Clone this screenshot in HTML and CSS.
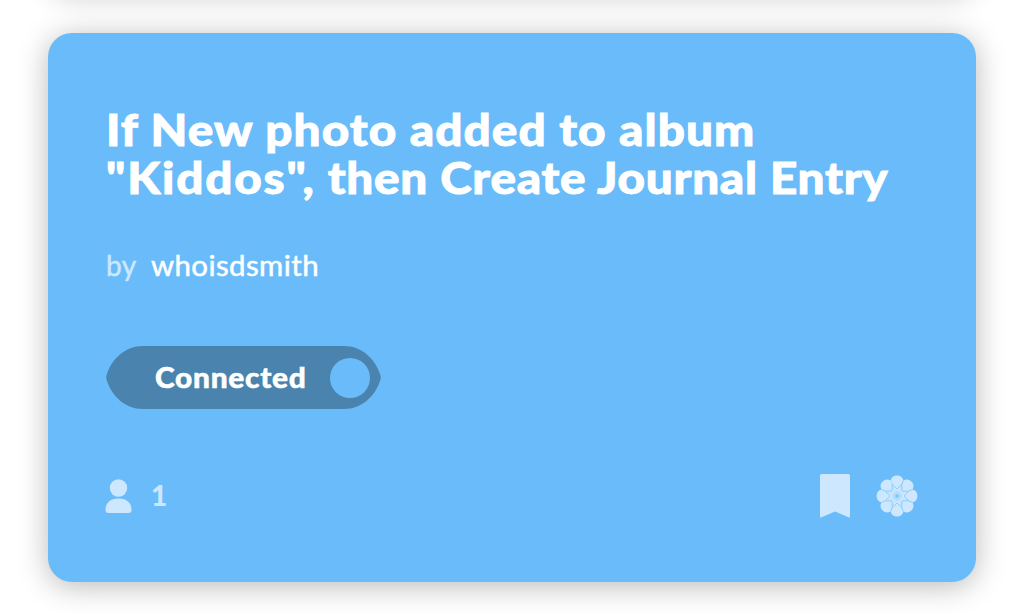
FILE: index.html
```html
<!DOCTYPE html>
<html lang="en">
<head>
<meta charset="utf-8">
<title>Applet</title>
<link rel="stylesheet" href="styles.css">
</head>
<body>
<main class="feed">
  <div class="card card-previous"></div>
  <article class="card">
    <h1 class="title"><span class="line line-one">If New photo added to album</span><span class="line line-two"><span class="quoted">"Kiddos",</span> then Create Journal Entry</span></h1>
    <p class="author"><span class="by">by</span><span class="name">whoisdsmith</span></p>
    <button class="toggle" type="button">
      <svg class="toggle-shape" viewBox="0 0 275 63"><path d="M37 0H238C256 0 269 13 274 28Q275.500 31.500 274 35C269 50 256 63 238 63H37C19 63 6 50 1 35Q-.5 31.500 1 28C6 13 19 0 37 0Z"/></svg>
      <span class="toggle-label">Connected</span>
      <span class="knob"></span>
    </button>
    <footer class="meta">
      <svg class="person" viewBox="0 0 27 35"><circle cx="13.500" cy="9" r="8.700"/><path d="M.5 31C.5 24 5 19.500 13.500 19.500S26.500 24 26.500 31Q26.500 34 23.500 34H3.500Q.5 34 .5 31Z"/></svg>
      <span class="count">1</span>
      <svg class="bookmark" viewBox="0 0 30 44"><path d="M1.500 0H28.500Q30 0 30 1.500V42.500Q30 44 28.500 43.300L15 37.500 1.500 43.300Q0 44 0 42.500V1.500Q0 0 1.500 0Z"/></svg>
      <svg class="flower" viewBox="-21 -21 42 42">
        <defs><g id="petal"><path d="M0 0L-6.400 -15.400A6.600 6.600 0 0 1 6.400 -15.400Z"/><path class="vein" d="M-4.800 -11.600L0 -7L4.800 -11.600M-4.800 -11.600L-6.400 -15.400"/></g></defs>
        <g class="petals">
          <use href="#petal"/><use href="#petal" transform="rotate(45)"/><use href="#petal" transform="rotate(90)"/><use href="#petal" transform="rotate(135)"/><use href="#petal" transform="rotate(180)"/><use href="#petal" transform="rotate(225)"/><use href="#petal" transform="rotate(270)"/><use href="#petal" transform="rotate(315)"/>
        </g>
        <path class="rays" d="M0 -5V5M-5 0H5M-3.500 -3.500L3.500 3.500M3.500 -3.500L-3.500 3.500"/>
      </svg>
    </footer>
  </article>
</main>
</body>
</html>
```
FILE: styles.css
```css
* { box-sizing: border-box; }
body {
  margin: 0;
  height: 613px;
  overflow: hidden;
  background: #fff;
  font-family: Lato, "Open Sans", sans-serif;
}
.feed {
  display: flex;
  flex-direction: column;
  gap: 38px;
  width: 928px;
  margin: -64.6px 0 0 48px;
}
.card {
  height: 548.4px;
  flex: none;
  padding: 71.6px 58px 0;
  border-radius: 24px;
  background: #69bcf9;
  box-shadow: 0 4px 30px rgba(0, 0, 0, .28);
}
.card-previous {
  height: 60px;
  padding: 0;
  background: #fff;
  box-shadow: 0 2px 28px rgba(0, 0, 0, .2);
}
.title {
  margin: 0;
  color: #fff;
  font-size: 44.5px;
  font-weight: 900;
  line-height: 48px;
  white-space: nowrap;
  -webkit-text-stroke: .9px #fff;
}
.line {
  display: block;
  width: max-content;
  letter-spacing: 1px;
  transform-origin: left;
}
.line-one { transform: scaleX(1.072); }
.line-two { letter-spacing: .7px; transform: scaleX(1.07); }
.quoted { letter-spacing: 1.7px; }
.author {
  display: flex;
  gap: 14px;
  margin: 46px 0 0;
  color: #fff;
  font-size: 28px;
  line-height: 36px;
  -webkit-text-stroke: .5px;
}
.by { color: #cde8fe; letter-spacing: .4px; }
.name {
  letter-spacing: .4px;
  transform: scaleX(1.05);
  transform-origin: left;
}
.toggle {
  position: relative;
  display: flex;
  align-items: center;
  justify-content: space-between;
  width: 275px;
  height: 63px;
  margin: 63px 0 0;
  padding: 0 11px 0 49px;
  border: 0;
  background: none;
  color: #fff;
  font: 900 28px/36px Lato, "Open Sans", sans-serif;
  letter-spacing: .7px;
  -webkit-text-stroke: .5px;
}
.toggle-shape {
  position: absolute;
  inset: 0;
  width: 275px;
  height: 63px;
  fill: #4983ae;
}
.toggle-label {
  position: relative;
  padding-bottom: 2px;
  transform: scaleX(1.065);
  transform-origin: left;
}
.knob {
  position: relative;
  width: 40px;
  height: 40px;
  border-radius: 50%;
  background: #69bcf9;
}
.meta {
  display: flex;
  align-items: center;
  height: 44px;
  margin-top: 65px;
  color: #cde8fe;
  fill: #cde8fe;
}
.person { width: 27px; height: 35px; margin-left: -1px; }
.count {
  margin-left: 19px;
  padding-bottom: 3px;
  font-size: 28px;
  font-weight: 900;
  line-height: 36px;
}
.bookmark { width: 30px; height: 44px; margin-left: auto; }
.flower { width: 42px; height: 42px; margin-left: 26px; }
.vein, .rays { fill: none; stroke: #69bcf9; stroke-width: .6; }
```
